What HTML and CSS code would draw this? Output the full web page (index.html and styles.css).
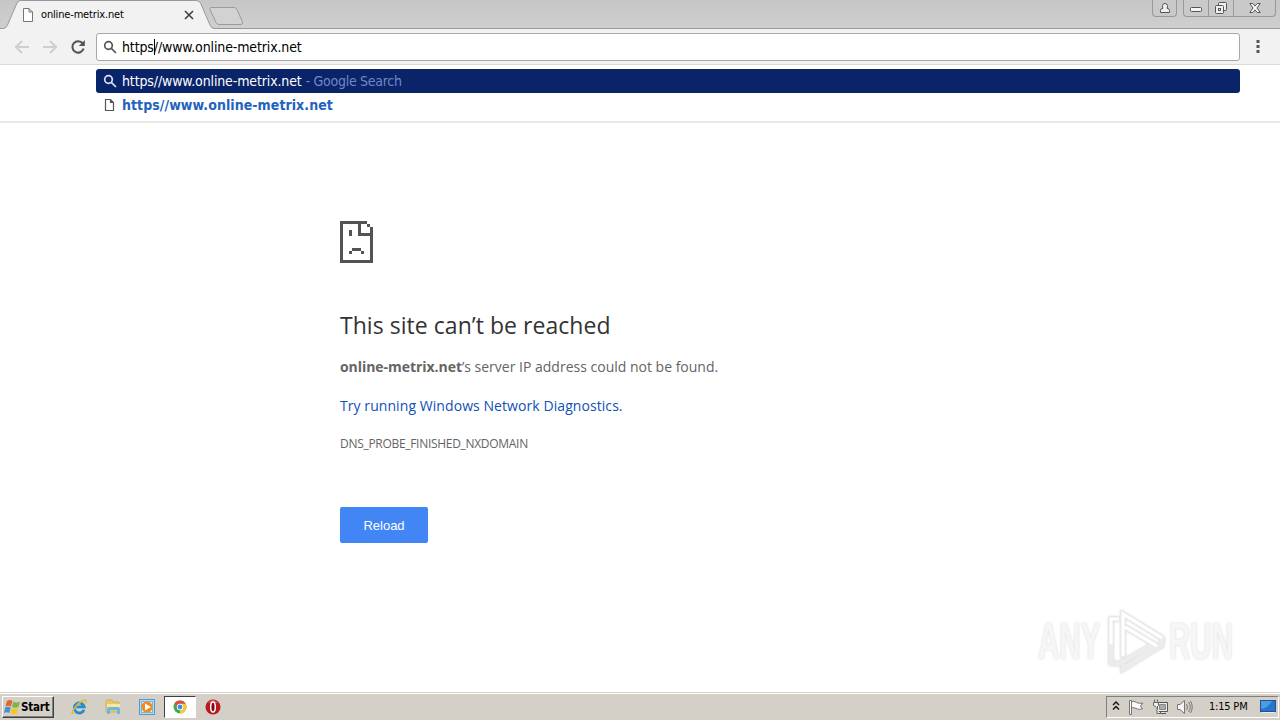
FILE: index.html
```html
<!DOCTYPE html>
<html lang="en">
<head>
    <meta charset="UTF-8">
    <meta name="viewport" content="width=device-width, initial-scale=1.0">
    <title>online-metrix.net</title>
    <link rel="stylesheet" href="styles.css">
</head>
<body>
    <header class="tab-strip">
        <svg class="tab-shapes" width="260" height="29" viewBox="0 0 260 29">
            <path d="M0 28.5H3Q6 28.5 7.500 25L17 3Q18.500 .5 21 .5H196Q199 .5 200.500 3L210 25Q211.500 28.500 214 28.500V29H0Z" fill="#f2f2f2"/>
            <path d="M0 28.500H3Q6 28.500 7.500 25L17 3Q18.500 .5 21 .5H196Q199 .5 200.500 3L210 25Q211.500 28.500 214 28.500H260" fill="none" stroke="#999"/>
            <path d="M211 7.500H234Q236 7.500 237 9.500L242.500 22Q243 24.500 241 24.500H219Q217 24.500 216 22.500L210 9.500Q209.500 7.500 211 7.500Z" fill="#d2d2d2" stroke="#9c9c9c"/>
        </svg>
        <div class="tab">
            <svg width="12" height="14" viewBox="0 0 12 14" fill="#fff" stroke="#777">
                <path d="M1.500 .5H7L10.500 4V13.500H1.500ZM7 .5V4H10.500"/>
            </svg>
            <span class="tab-title">online-metrix.net</span>
            <svg width="10" height="10" viewBox="0 0 10 10" stroke="#444" stroke-width="1.7">
                <path d="M1 1L9 9M9 1L1 9"/>
            </svg>
        </div>
        <div class="window-controls">
            <button class="profile" aria-label="Profile">
                <svg width="12" height="12" viewBox="0 0 12 12" fill="#eee" stroke="#555">
                    <path d="M1.500 10.500V8.500Q1.500 6.500 4 6.200Q3.300 5 3.500 3.500Q3.700 1.500 6 1.500T8.500 3.500Q8.700 5 8 6.200Q10.500 6.500 10.500 8.500V10.500Z"/>
                </svg>
            </button>
            <div class="window-buttons">
                <button class="minimize" aria-label="Minimize">
                    <svg width="12" height="12" viewBox="0 0 12 12"><rect x=".5" y="5.500" width="11" height="4" rx="1" fill="#f4f4f4" stroke="#555"/></svg>
                </button>
                <button class="restore" aria-label="Restore">
                    <svg width="14" height="14" viewBox="0 0 14 14" fill="#eee" stroke="#555">
                        <rect x="4.500" y="1.500" width="8" height="8" rx="1"/>
                        <rect x="1.500" y="4.500" width="8" height="8" rx="1"/>
                        <rect x="4.500" y="7.500" width="2" height="2"/>
                    </svg>
                </button>
                <button class="close" aria-label="Close">
                    <svg width="12" height="12" viewBox="0 0 12 12">
                        <path d="M.8 1.500H3.800L6 4L8.200 1.500H11.200L8 6L11.200 10.500H8.200L6 8L3.800 10.500H.8L4 6Z" fill="#f3f3f3" stroke="#555"/>
                    </svg>
                </button>
            </div>
        </div>
    </header>

    <nav class="toolbar">
        <div class="nav-buttons">
            <svg width="16" height="16" viewBox="0 0 16 16" fill="none" stroke="#cecece" stroke-width="2"><path d="M15 8H2M8 2L2 8L8 14"/></svg>
            <svg width="16" height="16" viewBox="0 0 16 16" fill="none" stroke="#cecece" stroke-width="2"><path d="M1 8H14M8 2L14 8L8 14"/></svg>
            <svg width="16" height="16" viewBox="0 0 16 16"><path d="M12.700 4.500A5.700 5.700 0 1 0 13.600 9.500" fill="none" stroke="#555" stroke-width="2.100"/><path d="M14.800 1V7H8.800Z" fill="#555"/></svg>
        </div>
        <div class="omnibox">
            <svg class="search-icon" width="14" height="14" viewBox="0 0 14 14"><circle cx="5.500" cy="5.500" r="3.800"/><path d="M8.300 8.300L13 13"/></svg>
            <span class="url"><span class="typed">https</span>//www.online-metrix.net</span>
        </div>
        <svg class="menu-dots" width="4" height="14" viewBox="0 0 4 14" fill="#555"><rect x=".5" y="0" width="3" height="3"/><rect x=".5" y="5" width="3" height="3"/><rect x=".5" y="10" width="3" height="3"/></svg>
    </nav>

    <div class="suggestions">
        <div class="suggestion selected">
            <svg class="search-icon" width="14" height="14" viewBox="0 0 14 14"><circle cx="5.500" cy="5.500" r="3.800"/><path d="M8.300 8.300L13 13"/></svg>
            <span class="url">https//www.online-metrix.net</span>
            <span class="provider">- Google Search</span>
        </div>
        <div class="suggestion">
            <svg width="14" height="14" viewBox="0 0 14 14" fill="#fff" stroke="#555" stroke-width="1.200"><path d="M2.500 1.500H7.500L10.500 4.500V12.500H2.500ZM7.500 1.500V4.500H10.500"/></svg>
            <span class="match">https//www.online-metrix.net</span>
        </div>
    </div>

    <main class="error-page">
        <svg class="sad-page" width="33" height="42" viewBox="0 0 11 14" fill="#535353" shape-rendering="crispEdges">
            <path d="M0 0H9V1H7V4H11V5H6V1H1V13H10V5H11V14H0ZM9 1H10V2H9ZM10 2H11V5H10ZM3 3H4V5H3ZM4 9H7V10H4ZM3 10H4V11H3ZM7 10H8V11H7Z"/>
        </svg>
        <h1>This site can’t be reached</h1>
        <p class="summary"><strong>online-metrix.net</strong><span>’s server IP address could not be found.</span></p>
        <a class="diagnose" href="#">Try running Windows Network Diagnostics.</a>
        <p class="error-code">DNS_PROBE_FINISHED_NXDOMAIN</p>
        <button class="reload">Reload</button>
    </main>

    <div class="watermark">
        <span>ANY</span>
        <svg width="62" height="66" viewBox="0 0 62 66" fill="none">
            <g stroke="#ececec" stroke-width="5">
                <path d="M14 11H6V55L14 56L51 35"/>
                <path d="M18 61L57 37V30L18 6V50"/>
                <path d="M20 19L52 38L18 61V55"/>
            </g>
            <path d="M14 11H6V36M18 48V6L57 30M20 19L52 38" stroke="#fff" stroke-width="3"/>
        </svg>
        <span>RUN</span>
    </div>

    <footer class="taskbar">
        <button class="start">
            <svg width="17" height="16" viewBox="0 0 17 16">
                <path d="M3 2Q6 0 8.500 2L7 7.500Q4.500 6 1.500 7.500Z" fill="#e8632c"/>
                <path d="M9.500 2.500Q12.500 4.500 16 2.500L14.500 8Q11 9.500 8 8Z" fill="#79b843"/>
                <path d="M1.200 8.500Q4 7 6.700 8.500L5.200 14Q3 12.500 0 14Z" fill="#4290d5"/>
                <path d="M7.700 9Q11 10.500 14.200 9L12.700 14.500Q9 16 6.200 14.500Z" fill="#f5c52d"/>
            </svg>
            <span>Start</span>
        </button>
        <div class="quick-launch">
            <div class="launcher">
                <svg width="17" height="16" viewBox="0 0 17 16" fill="none">
                    <path d="M13 10.800A5 5 0 1 1 13.200 7.800H5" stroke="#238bd0" stroke-width="2.800"/>
                    <path d="M2.500 14Q-.5 15 2.500 10.500Q6 5 11 2Q16 -.5 15 4" stroke="#e5b633" stroke-width="1.500"/>
                </svg>
            </div>
            <div class="launcher">
                <svg width="16" height="16" viewBox="0 0 16 16">
                    <path d="M1 3L2 1H7L8 3H14V13H1Z" fill="#e8c967" stroke="#c5a64d" stroke-width=".7"/>
                    <path d="M2 5H15V11H2Z" fill="#f8e6a0"/>
                    <path d="M2 15V10Q2 8 4 8H13Q15 8 15 10V15H12V11H5V15Z" fill="#69b8df"/>
                </svg>
            </div>
            <div class="launcher">
                <svg width="16" height="16" viewBox="0 0 16 16">
                    <rect x=".5" y=".5" width="15" height="15" fill="#b7dcf2" stroke="#5199cf"/>
                    <rect x="2.500" y="2.500" width="11" height="11" fill="#d9eefa" stroke="#7ab4dc"/>
                    <circle cx="8" cy="8" r="5.500" fill="#ee8b20"/><path d="M6 4.500L12 8L6 11.500Z" fill="#fff"/>
                </svg>
            </div>
            <div class="launcher active">
                <svg width="14" height="14" viewBox="0 0 14 14">
                    <circle cx="7" cy="7" r="6.500" fill="#44a853"/>
                    <path d="M7 7L1.370 3.750A6.500 6.500 0 0 1 12.630 3.750Z" fill="#df4b39"/>
                    <path d="M7 7V3.750H12.630A6.500 6.500 0 0 1 7 13.500Z" fill="#f7c936"/>
                    <circle cx="7" cy="7" r="3.200" fill="#fff"/><circle cx="7" cy="7" r="2.400" fill="#4588ed"/>
                </svg>
            </div>
            <div class="launcher">
                <svg width="16" height="16" viewBox="0 0 16 16"><circle cx="8" cy="8" r="7.500" fill="#ba171f"/><path d="M3 4Q8 -2 13 4Z" fill="#d8585b"/><ellipse cx="8" cy="8" rx="2.300" ry="5" fill="#85070d" stroke="#fff" stroke-width="1.500"/></svg>
            </div>
        </div>
        <div class="tray">
            <svg class="chevrons" width="8" height="10" viewBox="0 0 8 10" fill="none" stroke="#111" stroke-width="1.400"><path d="M1 4L4 1L7 4M1 8.500L4 5.500L7 8.500"/></svg>
            <svg class="flag" width="16" height="16" viewBox="0 0 16 16" fill="#fafafa" stroke="#777"><path d="M1.500 1.500H3.500V15.500H1.500ZM3.500 2.500Q6 1.500 8.500 3.500Q11 5 15 4L12.500 7L14.500 10Q10 11 8 9.500Q6 8 3.500 9"/></svg>
            <svg class="network" width="17" height="16" viewBox="0 0 17 16"><path d="M5.500 3.500H15.500V12.500H5.500ZM8.500 12.500V14.500H14" fill="#eee" stroke="#555"/><path d="M7.500 5.500H13.500V10.500H7.500Z" fill="#aaa" stroke="#888"/><path d="M2.500 .5V3M5.500 .5V3M1.500 3.500H6.500V6.500L5 8V14.500H8M4 8L1.500 6.500V3.500" fill="#eee" stroke="#666"/></svg>
            <svg class="volume" width="17" height="16" viewBox="0 0 17 16" fill="none" stroke="#777"><path d="M1.500 5.500H4L8.500 1.500V14.500L4 10.500H1.500Z" fill="#f6f6f6"/><path d="M10.500 5Q12.500 8 10.500 11M12.500 3Q16 8 12.500 13M14.500 2Q18 8 14.500 14"/></svg>
            <time>1:15 PM</time>
            <svg class="desktop" width="16" height="14" viewBox="0 0 16 14"><rect x=".5" y=".5" width="15" height="11" fill="#2675cd" stroke="#24518c"/><path d="M1 9Q8 8 12 1H1Z" fill="#4b9be7"/><path d="M2 12.500H14" stroke="#e9edf3"/></svg>
        </div>
    </footer>
</body>
</html>
```

FILE: styles.css
```css
* {
    box-sizing: border-box;
}
body {
    width: 1280px;
    height: 720px;
    margin: 0;
    display: flex;
    flex-direction: column;
    position: relative;
    overflow: hidden;
    background: #fff;
    font-family: "DejaVu Sans Condensed", "DejaVu Sans", sans-serif;
}
svg {
    display: block;
    flex: none;
}
button {
    border: 0;
    padding: 0;
    font-family: inherit;
}
.tab-strip {
    height: 29px;
    display: flex;
    justify-content: space-between;
    position: relative;
    background: linear-gradient(#c6c6c6, #cfcfcf);
    border-bottom: 1px solid #999;
}
.tab-shapes {
    position: absolute;
    left: 0;
    top: 0;
}
.tab {
    display: flex;
    align-items: center;
    width: 194px;
    height: 29px;
    margin-left: 22px;
    position: relative;
}
.tab-title {
    width: 143px;
    margin-left: 7px;
    font-size: 11px;
    letter-spacing: -0.16px;
    white-space: nowrap;
}
.window-controls {
    display: flex;
    gap: 6px;
    margin-right: 4px;
}
.window-controls button {
    height: 17px;
    display: flex;
    justify-content: center;
    align-items: center;
    background: #c9c9c9;
    border: 1px solid #999;
    border-top: 0;
}
.window-controls .profile {
    width: 25px;
    border-radius: 0 0 4px 4px;
}
.window-buttons {
    display: flex;
}
.window-controls .minimize {
    width: 26px;
    border-radius: 0 0 0 4px;
}
.window-controls .restore {
    width: 25px;
    border-left: 0;
}
.window-controls .close {
    width: 42px;
    border-left: 0;
    border-radius: 0 0 4px 0;
}
.toolbar {
    height: 36px;
    display: flex;
    align-items: center;
    background: #f2f2f2;
    border-bottom: 1px solid #dcdad7;
}
.nav-buttons {
    width: 96px;
    padding-left: 14px;
    display: flex;
    gap: 12px;
}
.omnibox {
    width: 1144px;
    height: 28px;
    padding-left: 6px;
    display: flex;
    align-items: center;
    gap: 5px;
    background: #fff;
    border: 1px solid #a9a9a9;
    border-radius: 3px;
}
.search-icon {
    fill: none;
    stroke: #555;
    stroke-width: 1.7;
}
.url {
    font-size: 14px;
    letter-spacing: -0.13px;
    white-space: nowrap;
}
.typed {
    border-right: 1px solid #000;
    margin-right: -1px;
}
.menu-dots {
    margin-left: 16px;
}
.suggestions {
    height: 58px;
    padding: 4px 40px 0 96px;
    border-bottom: 2px solid #e9e9e9;
}
.suggestion {
    height: 24px;
    padding-left: 7px;
    display: flex;
    align-items: center;
    gap: 5px;
    border-radius: 3px;
}
.selected {
    background: #0a246a;
    color: #fff;
}
.selected .search-icon {
    stroke: #dce3f5;
}
.provider {
    margin-left: -1px;
    font-size: 14px;
    letter-spacing: -0.28px;
    color: #7387c4;
}
.match {
    font-size: 14px;
    font-weight: bold;
    letter-spacing: 0.06px;
    color: #2362bd;
}
.error-page {
    flex: 1;
    display: flex;
    flex-direction: column;
    align-items: flex-start;
    padding: 98px 0 0 340px;
    font-family: "Open Sans", "Noto Sans", sans-serif;
    color: #646464;
}
h1 {
    margin: 46px 0 0;
    font-size: 23px;
    font-weight: normal;
    line-height: 32px;
    letter-spacing: 0.04px;
    color: #333;
}
.summary {
    margin: 15px 0 0;
    font-size: 14px;
    line-height: 22px;
    white-space: nowrap;
}
.summary strong {
    letter-spacing: -0.05px;
}
.diagnose {
    margin-top: 17px;
    font-size: 14px;
    line-height: 22px;
    letter-spacing: 0.07px;
    color: #1150b5;
    text-decoration: none;
}
.error-code {
    margin: 18px 0 0;
    font-size: 12px;
    line-height: 18px;
    letter-spacing: -0.3px;
}
.reload {
    width: 88px;
    height: 36px;
    margin-top: 54px;
    background: #4285f4;
    border-radius: 2px;
    color: #fff;
    font-family: "Liberation Sans", sans-serif;
    font-size: 13px;
}
.watermark {
    position: absolute;
    left: 1038px;
    top: 607px;
    height: 68px;
    display: flex;
    align-items: center;
    color: #f6f6f6;
    font-family: "Liberation Sans", sans-serif;
    font-size: 51px;
    font-weight: bold;
    text-shadow: 0 0 3px #d4d4d4;
}
.watermark span {
    width: 67px;
    transform: scaleX(0.58);
    transform-origin: left;
}
.watermark svg {
    filter: drop-shadow(0 0 1px #ccc);
}
.watermark svg + span {
    margin-left: 2px;
}
.taskbar {
    height: 28px;
    display: flex;
    align-items: center;
    background: #d4d0c8;
    border-top: 1px solid #d4d0c8;
    box-shadow: inset 0 1px #fff;
    color: #000;
}
.start {
    width: 52px;
    height: 22px;
    margin: 1px 0 0 2px;
    padding-left: 1px;
    display: flex;
    align-items: center;
    background: #d4d0c8;
    border: 1px solid;
    border-color: #fff #404040 #404040 #fff;
    box-shadow: inset -1px -1px #808080;
    font-size: 11.5px;
    font-weight: bold;
}
.start span {
    letter-spacing: -0.2px;
}
.quick-launch {
    display: flex;
    margin: 0 0 0 9px;
}
.launcher {
    width: 33.6px;
    height: 22px;
    display: flex;
    justify-content: center;
    align-items: center;
}
.launcher.active {
    width: 32px;
    background: #fff;
    border: 1px solid;
    border-color: #404040 #fff #fff #404040;
}
.tray {
    width: 173px;
    height: 22px;
    margin: 0 1px 0 auto;
    padding-left: 5px;
    display: flex;
    align-items: center;
    border: 1px solid;
    border-color: #808080 #fff #fff #808080;
    font-size: 11px;
}
.chevrons {
    margin-bottom: 2px;
}
.flag {
    margin-left: 8px;
}
.network {
    margin-left: 8px;
}
.volume {
    margin-left: 7px;
}
.tray time {
    width: 50px;
    margin-left: 16px;
    letter-spacing: -0.2px;
    white-space: nowrap;
}
.desktop {
    margin-left: 1px;
}
```
